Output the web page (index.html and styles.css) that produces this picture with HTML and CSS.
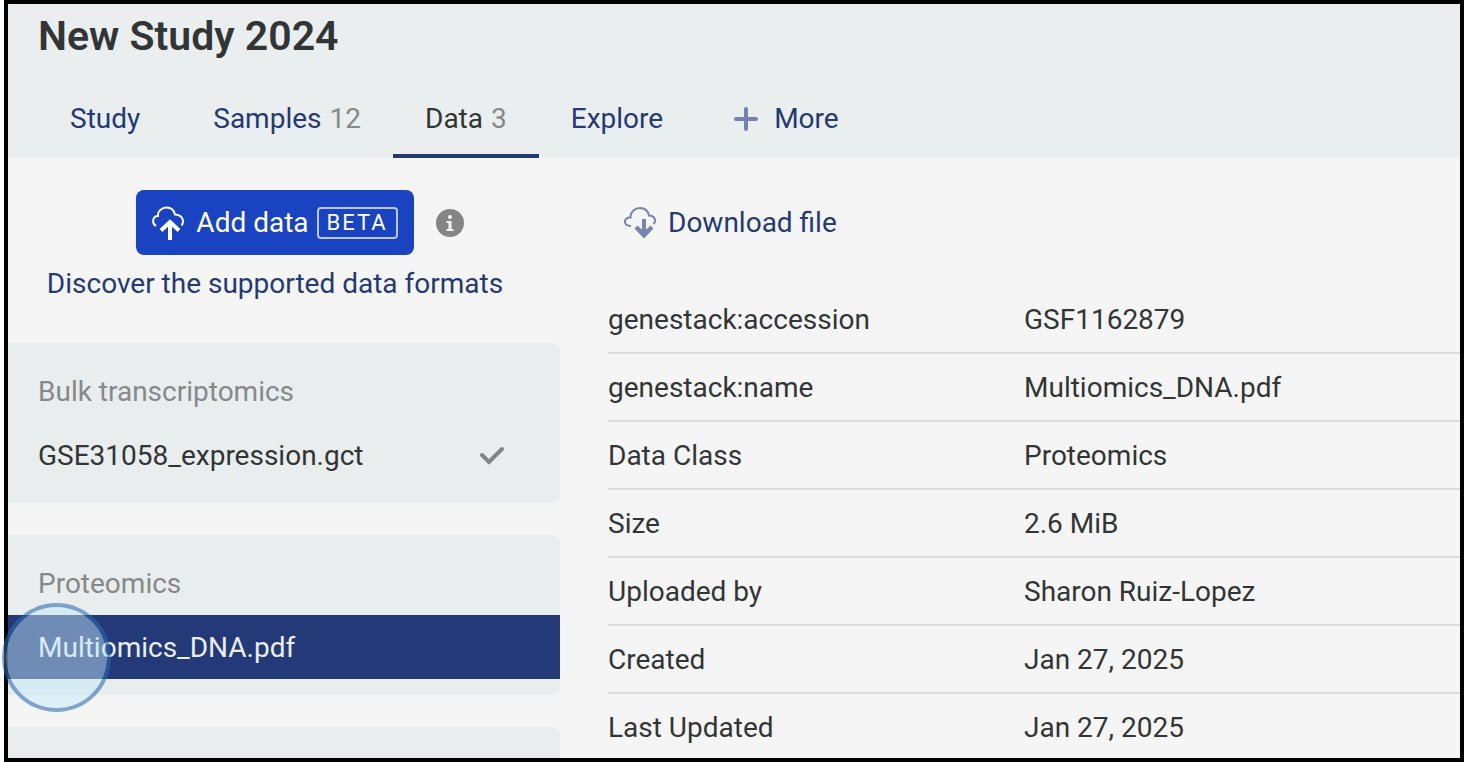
FILE: index.html
```html
<!DOCTYPE html>
<html lang="en">
<head>
    <meta charset="UTF-8">
    <title>New Study 2024</title>
    <link rel="stylesheet" href="styles.css">
</head>
<body>
<div class="app">
    <header class="header">
        <h1 class="title">New Study 2024</h1>
        <nav class="tabs">
            <a class="tab tab-study" href="#">Study</a>
            <a class="tab" href="#">Samples <span class="count">12</span></a>
            <a class="tab active" href="#">Data <span class="count">3</span></a>
            <a class="tab" href="#">Explore</a>
            <button class="tab tab-more" type="button">
                <svg width="24" height="24" viewBox="0 0 24 24" fill="none" stroke="#7482ad" stroke-width="4" stroke-linecap="round"><path d="M12 2v20M2 12h20"/></svg>
                More
            </button>
        </nav>
    </header>

    <main class="main">
        <!-- file list -->
        <aside class="sidebar">
            <div class="actions">
                <div class="add-row">
                    <button class="btn-add" type="button">
                        <svg width="32" height="34" viewBox="0 0 32 34" fill="none" stroke="#fff">
                            <path d="M4 20C-0.500 17 0.500 10 6 10C5.500 5 10 1.500 14.500 1.500C19 1.500 22 4 23 8.500C28 8.500 31 11.500 31 15C31 17 30.500 18.500 29.500 19.500" stroke-width="2"/>
                            <path d="M18 34V17M9 24.500L18 16l9 8.500" stroke-width="4"/>
                        </svg>
                        Add data
                        <span class="beta">BETA</span>
                    </button>
                    <button class="btn-info" type="button" aria-label="About adding data">
                        <svg width="28" height="28" viewBox="0 0 28 28"><circle cx="14" cy="14" r="14" fill="#858585"/><circle cx="14" cy="8" r="2" fill="#f5f5f5"/><path d="M10.500 12h5v8h2v2h-7v-2h2v-6h-2z" fill="#f5f5f5"/></svg>
                    </button>
                </div>
                <a class="link" href="#">Discover the supported data formats</a>
            </div>

            <section class="group">
                <h2 class="group-name">Bulk transcriptomics</h2>
                <a class="file" href="#">GSE31058_expression.gct
                    <svg width="26" height="20" viewBox="0 0 26 20" fill="none" stroke="#7f8585" stroke-width="4" stroke-linecap="round"><path d="M3 9l7 7L23 3"/></svg>
                </a>
            </section>
            <section class="group">
                <h2 class="group-name">Proteomics</h2>
                <a class="file selected" href="#">Multiomics_DNA.pdf</a>
                <span class="click-mark"></span>
            </section>
            <section class="group"></section>
        </aside>

        <!-- file details -->
        <section class="details">
            <button class="btn-download" type="button">
                <svg width="32" height="32" viewBox="0 0 32 32" fill="none" stroke="#7585ad">
                    <path d="M7 19C-1 19.500 -1 10 6.500 10.500C6 5 11 1 16 1C21 1 24 4 25 8.500C31 8.500 32.500 14 29.500 17" stroke-width="2"/>
                    <path d="M20 12v14" stroke-width="4"/>
                    <path d="M10.500 21.500l3-3 6.500 6 6.500-6 3 3L20 31.500z" fill="#7585ad" stroke="none"/>
                </svg>
                Download file
            </button>
            <table class="meta">
                <tr><th scope="row">genestack:accession</th><td>GSF1162879</td></tr>
                <tr><th scope="row">genestack:name</th><td>Multiomics_DNA.pdf</td></tr>
                <tr><th scope="row">Data Class</th><td>Proteomics</td></tr>
                <tr><th scope="row">Size</th><td>2.6 MiB</td></tr>
                <tr><th scope="row">Uploaded by</th><td>Sharon Ruiz-Lopez</td></tr>
                <tr><th scope="row">Created</th><td>Jan 27, 2025</td></tr>
                <tr><th scope="row">Last Updated</th><td>Jan 27, 2025</td></tr>
            </table>
        </section>
    </main>
</div>
</body>
</html>
```
FILE: styles.css
```css
* {
    box-sizing: border-box;
}
body {
    margin: 0;
    padding-left: 4px;
    background: #fff;
    color: #313535;
    font: 28px/36px Roboto, "Liberation Sans", sans-serif;
}
button {
    padding: 0;
    border: 0;
    background: none;
    color: inherit;
    font: inherit;
}
a {
    color: #233978;
    text-decoration: none;
}
svg {
    flex: none;
}
.app {
    display: flex;
    flex-direction: column;
    height: 100vh;
    border: 4px solid #000;
    background: #f5f5f5;
}

/* header */
.header {
    background: #eaeeef;
}
.title {
    margin: 0;
    padding: 8px 30px 22px;
    font-size: 41px;
    line-height: 48px;
    font-weight: 600;
}
.tabs {
    display: flex;
    padding-left: 30px;
}
.tab {
    display: flex;
    align-items: center;
    gap: 8px;
    height: 76px;
    padding: 2px 32px 0;
    border-bottom: 4px solid transparent;
    color: #233978;
}
.tab-study {
    padding-right: 41px;
}
.tab-more {
    gap: 16px;
    padding-left: 39px;
}
.tab.active {
    border-color: #233978;
    color: #313535;
}
.count {
    color: #858989;
}

.main {
    display: flex;
    flex: 1;
    min-height: 0;
}

/* sidebar */
.sidebar {
    display: flex;
    flex-direction: column;
    gap: 32px;
    flex: none;
    width: 552px;
}
.actions {
    display: flex;
    flex-direction: column;
    align-items: center;
    gap: 11px;
    padding: 32px 18px 9px 0;
}
.add-row {
    display: grid;
    grid-template-columns: 1fr auto 1fr;
    align-items: center;
    gap: 22px;
    width: 100%;
}
.btn-add {
    display: flex;
    grid-column: 2;
    align-items: center;
    gap: 8px;
    height: 65px;
    padding: 0 16px;
    border-radius: 8px;
    background: #1a43c2;
    color: #fff;
}
.btn-add svg {
    margin-right: 4px;
}
.beta {
    padding: 0 8px;
    border: 2px solid #bac6ec;
    border-radius: 4px;
    font-size: 22px;
    line-height: 28px;
    letter-spacing: 2px;
}
.btn-info {
    width: 28px;
    height: 28px;
}
.btn-info svg {
    display: block;
}
.group {
    position: relative;
    min-height: 160px;
    padding-bottom: 16px;
    border-radius: 0 8px 8px 0;
    background: #e9edee;
}
.group:last-child {
    flex: 1;
    min-height: 0;
    padding: 0;
    border-radius: 0 8px 0 0;
}
.group-name {
    margin: 0;
    padding: 31px 30px 13px;
    color: #858989;
    font-size: 28px;
    font-weight: 400;
}
.file {
    display: flex;
    align-items: center;
    justify-content: space-between;
    height: 64px;
    padding: 2px 55px 0 30px;
    color: #313535;
}
.file.selected {
    background: #233978;
    color: #eaeeef;
}
.click-mark {
    position: absolute;
    top: 68px;
    left: -6px;
    width: 109px;
    height: 109px;
    border: 4px solid rgba(45, 105, 180, .58);
    border-radius: 50%;
    background: rgba(195, 233, 250, .48);
    background-clip: padding-box;
}

/* details */
.details {
    flex: 1;
    padding-left: 48px;
}
.btn-download {
    display: flex;
    align-items: center;
    gap: 12px;
    height: 64px;
    margin: 32px 0 32px 16px;
    padding-top: 1px;
    color: #233978;
}
.meta {
    width: 100%;
    border-spacing: 0;
}
.meta th,
.meta td {
    height: 68px;
    padding: 2px 0 0;
    border-bottom: 2px solid #dcdcdc;
    text-align: left;
    font-weight: 400;
}
.meta th {
    width: 416px;
}
.meta tr:last-child > * {
    border-bottom-color: transparent;
}
```
